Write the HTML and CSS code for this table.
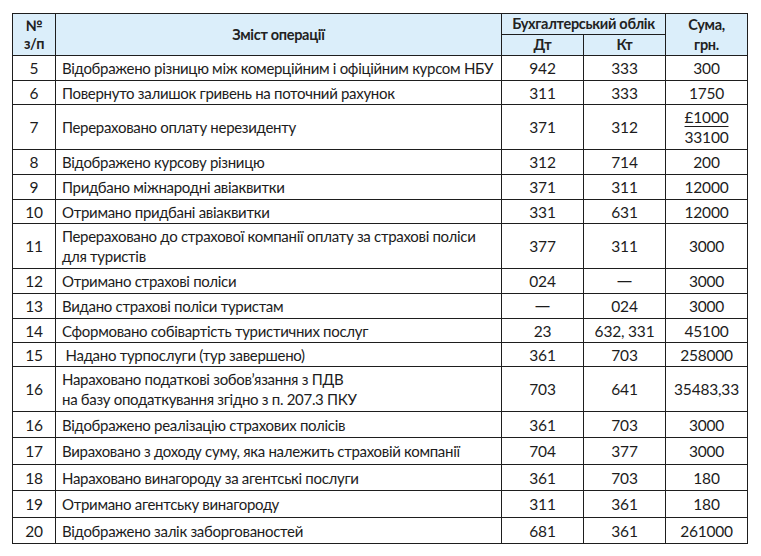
FILE: index.html
```html
<!DOCTYPE html>
<html lang="uk">
<head>
<meta charset="utf-8">
<link rel="stylesheet" href="styles.css">
</head>
<body>
<table class="ops">
  <colgroup>
    <col class="c-num"><col class="c-text"><col class="c-acc"><col class="c-acc"><col class="c-sum">
  </colgroup>
  <thead>
    <tr class="h-top">
      <th rowspan="2" class="num">№<br>з/п</th>
      <th rowspan="2">Зміст операції</th>
      <th colspan="2">Бухгалтерський облік</th>
      <th rowspan="2">Сума,<br>грн.</th>
    </tr>
    <tr class="h-bot">
      <th>Дт</th>
      <th>Кт</th>
    </tr>
  </thead>
  <tbody>
    <tr class="r25"><td class="num">5</td><td class="txt">Відображено різницю між комерційним і офіційним курсом НБУ</td><td>942</td><td>333</td><td>300</td></tr>
    <tr class="r24"><td class="num">6</td><td class="txt">Повернуто залишок гривень на поточний рахунок</td><td>311</td><td>333</td><td>1750</td></tr>
    <tr class="r45"><td class="num">7</td><td class="txt">Перераховано оплату нерезиденту</td><td>371</td><td>312</td><td class="frac"><span class="top">£1000</span><span>33100</span></td></tr>
    <tr class="r25"><td class="num">8</td><td class="txt">Відображено курсову різницю</td><td>312</td><td>714</td><td>200</td></tr>
    <tr class="r25"><td class="num">9</td><td class="txt">Придбано міжнародні авіаквитки</td><td>371</td><td>311</td><td>12000</td></tr>
    <tr class="r24"><td class="num">10</td><td class="txt">Отримано придбані авіаквитки</td><td>331</td><td>631</td><td>12000</td></tr>
    <tr class="r45"><td class="num">11</td><td class="txt">Перераховано до страхової компанії оплату за страхові поліси<br>для туристів</td><td>377</td><td>311</td><td>3000</td></tr>
    <tr class="r25"><td class="num">12</td><td class="txt">Отримано страхові поліси</td><td>024</td><td class="dash">—</td><td>3000</td></tr>
    <tr class="r25"><td class="num">13</td><td class="txt">Видано страхові поліси туристам</td><td class="dash">—</td><td>024</td><td>3000</td></tr>
    <tr class="r24"><td class="num">14</td><td class="txt">Сформовано собівартість туристичних послуг</td><td>23</td><td>632, 331</td><td>45100</td></tr>
    <tr class="r24"><td class="num">15</td><td class="txt">&nbsp;Надано турпослуги (тур завершено)</td><td>361</td><td>703</td><td>258000</td></tr>
    <tr class="r45"><td class="num">16</td><td class="txt">Нараховано податкові зобов’язання з ПДВ<br>на базу оподаткування згідно з п. 207.3 ПКУ</td><td>703</td><td>641</td><td>35483,33</td></tr>
    <tr class="r26"><td class="num">16</td><td class="txt">Відображено реалізацію страхових полісів</td><td>361</td><td>703</td><td>3000</td></tr>
    <tr class="r27"><td class="num">17</td><td class="txt">Вираховано з доходу суму, яка належить страховій компанії</td><td>704</td><td>377</td><td>3000</td></tr>
    <tr class="r26"><td class="num">18</td><td class="txt">Нараховано винагороду за агентські послуги</td><td>361</td><td>703</td><td>180</td></tr>
    <tr class="r27"><td class="num">19</td><td class="txt">Отримано агентську винагороду</td><td>311</td><td>361</td><td>180</td></tr>
    <tr class="r26"><td class="num">20</td><td class="txt">Відображено залік заборгованостей</td><td>681</td><td>361</td><td>261000</td></tr>
  </tbody>
</table>
</body>
</html>
```

FILE: styles.css
```css
html, body {
  margin: 0;
  padding: 0;
  background: #ffffff;
}
body {
  padding: 13px 0 0 12px;
  font-family: Lato, "Noto Sans", sans-serif;
  color: #1c1c1c;
}
.ops {
  border-collapse: collapse;
  table-layout: fixed;
  width: 736px;
  font-size: 15px;
  line-height: 20px;
  letter-spacing: -0.3px;
}
.c-num { width: 43px; }
.c-text { width: 446px; }
.c-acc { width: 82px; }
.c-sum { width: 82px; }
.ops th, .ops td {
  border: 1px solid #1e1e1e;
  padding: 0;
  text-align: center;
  vertical-align: middle;
}
.ops tbody td:not(.txt) {
  font-size: 15.5px;
  letter-spacing: -0.2px;
}
.ops thead th {
  background: #dbeefa;
  font-weight: 700;
  color: #222222;
  letter-spacing: -0.3px;
  font-size: 14.5px;
}
.h-top { height: 20px; }
.h-bot { height: 21px; }
.ops thead th.num { line-height: 18px; }
.ops td.txt {
  text-align: left;
  padding-left: 6px;
  white-space: nowrap;
}
.ops td.dash {
  font-family: "DejaVu Sans", sans-serif;
  font-size: 13px;
}
.r24 { height: 24px; }
.r25 { height: 25px; }
.r26 { height: 26px; }
.r27 { height: 27px; }
.r45 { height: 45px; }
.frac span {
  display: block;
  line-height: 20px;
}
.frac .top {
  display: inline-block;
  text-decoration: underline;
  text-underline-offset: 3px;
}
```
